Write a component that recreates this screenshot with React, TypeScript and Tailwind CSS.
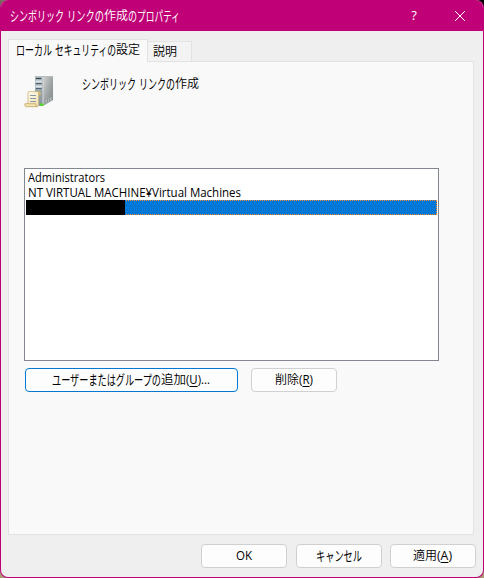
import { useLayoutEffect, useRef, type ReactNode } from "react";

/** Text run condensed or stretched to the width a UI font would give it. */
function Run({ w, kana, kanji, children }: { w: number; kana?: boolean; kanji?: boolean; children: ReactNode }) {
  const ref = useRef<HTMLSpanElement>(null);
  useLayoutEffect(() => {
    const el = ref.current;
    if (!el) return;
    el.style.transform = "none";
    const natural = el.getBoundingClientRect().width;
    el.style.transform = `scale(${w / natural}, ${kana ? 1.14 : 1})`;
  }, [w, kana]);
  return (
    <span
      className={`inline-block shrink-0 whitespace-pre ${kanji ? "font-[350]" : "font-normal"}`}
      style={{ width: w }}
    >
      <span ref={ref} className="inline-block origin-left">
        {children}
      </span>
    </span>
  );
}

function Button({ className, children }: { className: string; children: ReactNode }) {
  return (
    <button className={`flex h-6 shrink-0 rounded-[4px] border bg-[#fdfdfd] leading-[22px] ${className}`}>
      {children}
    </button>
  );
}

function ServerIcon() {
  return (
    <svg width="34" height="34" viewBox="0 0 34 34" className="shrink-0">
      <defs>
        <linearGradient id="side" x1="0" y1="0" x2="1" y2="1">
          <stop offset="0" stopColor="#d3d5d4" />
          <stop offset=".45" stopColor="#a5aaaa" />
          <stop offset="1" stopColor="#7b8384" />
        </linearGradient>
        <linearGradient id="front" x1="0" y1="0" x2="0" y2="1">
          <stop offset="0" stopColor="#a9b4bb" />
          <stop offset="1" stopColor="#8a979d" />
        </linearGradient>
        <linearGradient id="paper" x1="0" y1="0" x2="1" y2="1">
          <stop offset="0" stopColor="#fffdf0" />
          <stop offset="1" stopColor="#f0dfac" />
        </linearGradient>
      </defs>
      <path d="M11 1h8v30h-8z" fill="url(#front)" />
      <path d="M19 1h10v24l-10 6z" fill="url(#side)" />
      <path d="M11 1.5h18" stroke="#b9bcbc" />
      <path d="M12 3.5h5" stroke="#35434b" />
      <path d="M11.5 6.5h6.5M11.5 11.5h6.5" stroke="#dce6ea" strokeWidth="2" />
      <path d="M12 8.5h5.5M12 13.5h5.5" stroke="#51626c" />
      <path d="M19 2v29" stroke="#d3d8d8" />
      <path d="M22 25.5l5.5-3.5v3l-5.5 3z" fill="#b6bcbc" />
      <path d="M23.5 24.5v3M25.5 23.5v3" stroke="#798283" strokeWidth=".6" />
      <path d="M16 28.5h3.5V31H16z" fill="#55d62c" />
      <path d="M4 17.5q0-.8 1-.8h9.5q1.5 0 1.5 2v1.3h-1.5V31H4z" fill="url(#paper)" stroke="#cbb27a" strokeWidth=".8" />
      <path d="M14 20v-2q0-1.3 1.3-1.3 1.4 0 1.4 1.3v2z" fill="#d5b76b" />
      <path d="M6 20.5h6M6 23.5h6M6 26.5h6" stroke="#8d97a2" />
      <path d="M.9 28.7h11v1.8q0 1.2 1.5 1.2H2.2Q.9 31.7.9 30z" fill="#f4e3ad" stroke="#c2a66b" strokeWidth=".8" />
    </svg>
  );
}

export default function App() {
  return (
    <div className="h-[578px] w-[484px] bg-[linear-gradient(90deg,#766a60_0_50%,#000_50%)] font-['Open_Sans','Noto_Sans_CJK_JP',sans-serif] text-[12px] text-black">
      <div className="h-full w-full bg-[linear-gradient(#0000_50%,#a89a72_50%)]">
        <div className="flex h-full w-full flex-col overflow-hidden rounded-[8px] border border-t-0 border-[#bf0077] bg-[#efefef]">
          <header className="flex h-[31px] shrink-0 items-center bg-[#bf0077] pl-[9px] leading-[31px] text-white">
            <Run kana w={54}>シンボリック</Run>
            <Run w={3}> </Run>
            <Run kana w={37}>リンクの</Run>
            <Run kanji w={24}>作成</Run>
            <Run kana w={9}>の</Run>
            <Run kana w={43}>プロパティ</Run>
            <span className="ml-auto w-3 text-center text-[13px]">?</span>
            <svg width="12" height="12" viewBox="0 0 12 12" className="mr-[17px] ml-[34px]">
              <path d="M1 1l10 10M11 1L1 11" stroke="white" />
            </svg>
          </header>
          <div className="flex h-[30px] shrink-0 items-end pl-[7px]">
            <div className="z-10 mb-[-1px] flex h-[23px] w-[140px] border border-b-0 border-[#e2e2e2] bg-[#f9f9f9] pl-[7px] leading-[20px]">
              <Run kana w={36}>ローカル</Run>
              <Run w={3}> </Run>
              <Run kana w={61}>セキュリティの</Run>
              <Run kanji w={24}>設定</Run>
            </div>
            <div className="flex h-[20px] w-[44px] border border-b-0 border-l-0 border-[#e2e2e2] bg-[#f3f3f3] pl-[5px] leading-[20px]">
              <Run kanji w={24}>説明</Run>
            </div>
          </div>
          <main className="ml-[7px] flex h-[474px] w-[466px] shrink-0 flex-col border border-[#e2e2e2] bg-[#f9f9f9] pl-[15px]">
            <div className="flex h-[106px] shrink-0 pt-[13px]">
              <ServerIcon />
              <div className="ml-[24px] flex h-[18px] leading-[18px]">
                <Run kana w={54}>シンボリック</Run>
                <Run w={3}> </Run>
                <Run kana w={36}>リンクの</Run>
                <Run kanji w={24}>作成</Run>
              </div>
            </div>
            <div className="h-[193px] w-[415px] shrink-0 border border-[#828790] bg-white px-px pt-px">
              <div className="flex h-[15px] pl-[2px] leading-[15px]">
                <Run w={77}>Administrators</Run>
              </div>
              <div className="flex h-[15px] pl-[2px] leading-[15px]">
                <Run w={213}>NT VIRTUAL MACHINE¥Virtual Machines</Run>
              </div>
              <div className="flex h-[15px] bg-[repeating-linear-gradient(90deg,#ff8728_0_1px,#0078d7_1px_2px)] py-px pr-px">
                <div className="my-[-1px] w-[99px] bg-black" />
                <div className="grow bg-[#0078d7]" />
                <div className="mr-[-1px] w-px bg-[repeating-linear-gradient(#ff8728_0_1px,#0078d7_1px_2px)]" />
              </div>
            </div>
            <div className="flex pt-[7px] pl-px">
              <Button className="w-[213px] border-[#0078d4] pl-[26px]">
                <Run kana w={109}>ユーザーまたはグループの</Run>
                <Run kanji w={25}>追加</Run>
                <Run w={24}>
                  (<u className="underline-offset-2">U</u>)...
                </Run>
              </Button>
              <Button className="ml-[13px] w-[86px] border-[#d0d0d0] pl-[23px]">
                <Run kanji w={24}>削除</Run>
                <Run w={14}>
                  (<u className="underline-offset-2">R</u>)
                </Run>
              </Button>
            </div>
          </main>
          <footer className="flex gap-[9px] pt-[9px] pl-[200px]">
            <Button className="w-[86px] border-[#d0d0d0] pl-[34px]">
              <Run w={16}>OK</Run>
            </Button>
            <Button className="w-[86px] border-[#d0d0d0] pl-[19px]">
              <Run kana w={46}>キャンセル</Run>
            </Button>
            <Button className="ml-[-1px] w-[86px] border-[#d0d0d0] pl-[22px]">
              <Run kanji w={24}>適用</Run>
              <Run w={15}>
                (<u className="underline-offset-2">A</u>)
              </Run>
            </Button>
          </footer>
        </div>
      </div>
    </div>
  );
}
